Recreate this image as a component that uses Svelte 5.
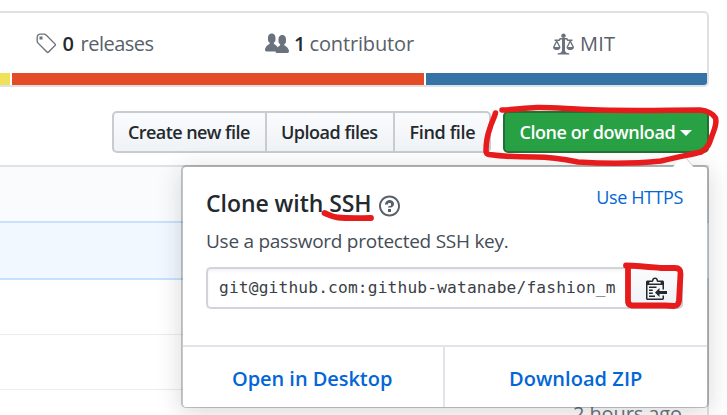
<script>
  const stats = [
    {
      name: 'tag', count: '0', label: 'releases', box: '0 0 14 16', width: 21,
      path: 'M7.73 1.73C7.26 1.26 6.62 1 5.96 1H3.5C2.13 1 1 2.13 1 3.5v2.47c0 .66.27 1.3.73 1.77l6.06 6.06c.39.39 1.02.39 1.41 0l4.59-4.59a.996.996 0 0 0 0-1.41L7.73 1.73zM2.38 7.09c-.31-.3-.47-.7-.47-1.13V3.5c0-.88.72-1.59 1.59-1.59h2.47c.42 0 .83.16 1.13.47l6.14 6.13-4.73 4.73-6.13-6.15zM3.01 3h2v2H3V3h.01z'
    },
    {
      name: 'people', count: '1', label: 'contributor', box: '0 0 16 16', width: 24,
      path: 'M16 12.999c0 .439-.45 1-1 1H7.995c-.539 0-.994-.447-.995-.999H1c-.54 0-1-.561-1-1 0-2.634 3-4 3-4s.229-.409 0-1c-.841-.621-1.058-.59-1-3 .058-2.419 1.367-3 2.5-3s2.442.58 2.5 3c.058 2.41-.159 2.379-1 3-.229.59 0 1 0 1s1.549.711 2.42 2.088C9.196 9.369 10 8.999 10 8.999s.229-.409 0-1c-.841-.62-1.058-.59-1-3 .058-2.419 1.367-3 2.5-3s2.437.581 2.495 3c.059 2.41-.158 2.38-1 3-.229.59 0 1 0 1s3.005 1.366 3.005 4'
    },
    {
      name: 'law', count: '', label: 'MIT', box: '0 0 14 16', width: 21,
      path: 'M7 4c-.83 0-1.5-.67-1.5-1.5S6.17 1 7 1s1.5.67 1.5 1.5S7.83 4 7 4zm7 6c0 1.11-.89 2-2 2h-1c-1.11 0-2-.89-2-2l2-4h-1c-.55 0-1-.45-1-1H8v8c.42 0 1 .45 1 1h1c.42 0 1 .45 1 1H3c0-.55.58-1 1-1h1c0-.55.58-1 1-1h.03L6 5H5c0 .55-.45 1-1 1H3l2 4c0 1.11-.89 2-2 2H2c-1.11 0-2-.89-2-2l2-4H1V5h3c0-.55.45-1 1-1h4c.55 0 1 .45 1 1h3v1h-1l2 4zM2.5 7L1 10h3L2.5 7zM13 10l-1.5-3-1.5 3h3z'
    }
  ];
</script>

<div class="page">
  <section class="summary">
    <div class="stats">
      {#each stats as s}
        <div class="stat {s.name}">
          <svg viewBox={s.box} width={s.width} height="24"><path fill-rule="evenodd" d={s.path} /></svg>
          {#if s.count}<b>{s.count}</b>{/if}
          <span>{s.label}</span>
        </div>
      {/each}
    </div>
    <div class="langs"><i class="js"></i><i class="html"></i><i class="py"></i></div>
  </section>

  <div class="actions">
    <div class="group">
      <button class="create"><span>Create new file</span></button>
      <button class="upload"><span>Upload files</span></button>
      <button class="find"><span>Find file</span></button>
    </div>
    <button class="clone"><span>Clone or download</span><i class="caret"></i></button>
  </div>

  <section class="files">
    <div class="commit"></div>
    <div class="notice"></div>
    <div class="row"></div>
    <div class="row"></div>
    <div class="row last"><span>2 hours ago</span></div>
  </section>

  <div class="popover">
    <div class="pointer"></div>
    <div class="body">
      <div class="head">
        <h4>Clone with SSH</h4>
        <svg viewBox="0 0 14 16" width="21" height="24"><path fill-rule="evenodd" d="M6 10h2v2H6v-2zm4-3.5C10 8.64 8 9 8 9H6c0-.55.45-1 1-1h.5c.28 0 .5-.22.5-.5v-1c0-.28-.22-.5-.5-.5h-1c-.28 0-.5.22-.5.5V7H4c0-1.5 1.5-3 3-3s3 1 3 2.5zM7 2.3c3.14 0 5.7 2.56 5.7 5.7s-2.56 5.7-5.7 5.7A5.71 5.71 0 0 1 1.3 8c0-3.14 2.56-5.7 5.7-5.7zM7 1C3.14 1 0 4.14 0 8s3.14 7 7 7 7-3.14 7-7-3.14-7-7-7z" /></svg>
        <a class="https">Use HTTPS</a>
      </div>
      <p>Use a password protected SSH key.</p>
      <div class="url">
        <div class="field"><span>git@github.com:github-watanabe/fashion_mnist.git</span></div>
        <button class="copy" aria-label="Copy">
          <svg viewBox="0 0 14 16" width="21" height="24"><path fill-rule="evenodd" d="M2 13h4v1H2v-1zm5-6H2v1h5V7zm2 3V8l-3 3 3 3v-2h5v-2H9zM4.500 9H2v1h2.500V9zM2 12h2.500v-1H2v1zm9 1h1v2c-.02.28-.11.52-.3.7-.19.18-.42.28-.7.3H1c-.55 0-1-.45-1-1V4c0-.55.45-1 1-1h3c0-1.110.89-2 2-2s2 .89 2 2h3c.55 0 1 .45 1 1v5h-1V6H1v9h10v-2zM2 5h8c0-.55-.45-1-1-1H8c-.55 0-1-.45-1-1s-.45-1-1-1-1 .45-1 1-.45 1-1 1H3c-.55 0-1 .45-1 1z" /></svg>
        </button>
      </div>
    </div>
    <div class="foot">
      <a class="desktop">Open in Desktop</a>
      <a class="zip">Download ZIP</a>
    </div>
  </div>

  <svg class="marks" viewBox="0 0 727 415" width="727" height="415">
    <path d="M495.500 113C494 119 491 123 490 128C487 136 486 143 486 151Q486 154 489 154.500C500 156 514 157 535 157C552 157 563 159 578 162C610 164 642 163 661 161C678 157 693 154 701 152C710 147 710 140 713 133Q717 123 715.500 118Q711 111 700 110C670 110 640 111 600 110C570 109 549 107 537 107.500C523 108 514 110 502 110" stroke-width="5.500" />
    <path d="M324.500 213C329 215 332 217 338 217.500C348 218.500 360 218 371 218" stroke-width="5.800" />
    <path d="M626 265.500C640 266 650 267 661 268L675 268Q681 268 680.500 274L679 301Q678 306 674 306L665 305.500L632 305.500Q627.500 305 628 300L628 269" stroke-width="5.800" />
  </svg>
</div>

<style>
  .page {
    position: relative; width: 727px; height: 415px; overflow: hidden; background: #fff;
    font-family: "Open Sans", "Noto Sans", sans-serif; color: #24292e; font-size: 20px;
  }
  * { box-sizing: border-box; }
  svg { display: block; flex: none; fill: currentColor; }
  button { font-family: inherit; padding: 0; margin: 0; text-align: left; }
  .summary {
    margin-top: 11px; width: 709px; height: 76px; border: 2px solid #dfe2e5; border-left: 0;
    border-radius: 0 5px 5px 0; overflow: hidden;
  }
  .stats { display: flex; height: 60px; padding-left: 34.500px; color: #6a737d; }
  .stat { display: flex; height: 60px; align-items: center; color: #586069; white-space: nowrap; }
  .stat svg { color: #6a737d; margin-top: 1px; }
  .stat b { font-weight: 600; color: #24292e; }
  .tag { width: 230.500px; }
  .people { width: 288px; }
  .tag b { width: 18px; margin-left: 7px; }
  .people b { width: 15.500px; margin-left: 5px; }
  .law span { margin-left: 6px; letter-spacing: .2px; }
  .tag span { letter-spacing: -.5px; }
  .people span { letter-spacing: -.15px; }
  .langs { display: flex; gap: 2px; height: 12px; }
  .langs i { display: block; }
  .js { width: 10px; background: #f1e05a; }
  .html { width: 412px; background: #e34c26; }
  .py { flex: 1; background: #3572a5; }
  .actions { display: flex; margin: 24px 18px 0 112px; height: 42px; }
  .group { display: flex; width: 379px; margin-right: 12px; }
  .group button, .clone {
    display: flex; align-items: center; height: 42px; font-size: 18px; font-weight: 600; white-space: nowrap;
    border: 2px solid #c8ccd0; color: #24292e; background: linear-gradient(#fafbfc, #eff3f6);
  }
  .group .create { width: 155px; padding-left: 14px; border-radius: 5px 0 0 5px; }
  .group .upload { width: 128px; padding-left: 14px; border-left: 0; }
  .group .find { width: 96px; padding-left: 14.500px; border-left: 0; border-radius: 0 5px 5px 0; }
  .create span { letter-spacing: -.57px; }
  .upload span { letter-spacing: -.5px; }
  .find span { letter-spacing: -.35px; }
  .clone { width: 206px; padding-left: 14.500px; color: #fff; background: #28a044; border-color: #246f38; border-radius: 5px; }
  .clone span { width: 160px; letter-spacing: -.45px; }
  .caret { border: 6px solid transparent; border-top-color: #fff; border-bottom: 0; margin-top: 2px; }
  .files { width: 709px; margin-top: 12px; border-top: 2px solid #dfe2e5; border-right: 2px solid #dfe2e5; height: 260px; }
  .commit { height: 54px; background: #fafbfc; }
  .notice { height: 59px; width: 709px; background: #f1f8ff; border: 2px solid #c8e1ff; border-left: 0; border-right: 0; }
  .row { height: 55px; border-bottom: 1px solid #eaecef; }
  .last { height: 40px; border: 0; padding: 10px 0 0 573px; color: #6a737d; white-space: nowrap; }
  .last span { letter-spacing: -.1px; }
  .popover {
    position: absolute; left: 181px; top: 165px; width: 528px; height: 243px;
    border: 2px solid rgba(27,31,35,.25); border-bottom-width: 1px; border-radius: 5px;
    background: #fff; background-clip: padding-box; box-shadow: 0 5px 24px rgba(27,31,35,.17);
  }
  .pointer {
    position: absolute; right: 14px; top: -12px; width: 0; height: 0;
    border: 10px solid transparent; border-bottom: 12px solid #fff; border-top: 0;
    filter: drop-shadow(1px 0 0 #c8ccd0);
  }
  .body { height: 178px; padding: 21px 24px 0 23px; }
  .head { display: flex; height: 30px; align-items: center; white-space: nowrap; }
  h4 { margin: 0; width: 173px; font-size: 23px; font-weight: 600; letter-spacing: -.05px; }
  .head svg { color: #586069; margin-top: 5px; }
  .https { margin: -13px 0 0 auto; color: #0366d6; font-size: 18px; letter-spacing: -.4px; }
  p { margin: 8px 0 0; height: 30px; line-height: 30px; font-size: 19px; letter-spacing: -.26px; color: #444d56; white-space: nowrap; }
  .url { display: flex; margin-top: 11px; height: 42px; width: 477px; }
  .field {
    width: 422px; border: 2px solid #d1d5da; border-right: 0; border-radius: 5px 0 0 5px;
    padding: 0 10px 0 11px; box-shadow: inset 0 2px 3px rgba(27,31,35,.06);
    font: 16.200px/38px "DejaVu Sans Mono", monospace; color: #3a4046;
  }
  .field span { display: block; overflow: hidden; white-space: nowrap; width: 398px; letter-spacing: .17px; }
  .copy {
    flex: 1; display: flex; align-items: center; justify-content: center; color: #24292e;
    border: 2px solid #c8ccd0; border-radius: 0 5px 5px 0; background: linear-gradient(#fafbfc, #eff3f6);
  }
  .copy svg { margin-left: 1px; }
  .foot { display: flex; height: 62px; border-top: 2px solid #e1e4e8; font-weight: 600; color: #0366d6; }
  .foot a { display: flex; align-items: center; padding-top: 2px; white-space: nowrap; }
  .desktop { width: 262px; padding-left: 49px; border-right: 2px solid #e1e4e8; letter-spacing: -.05px; }
  .zip { padding-left: 64px; letter-spacing: .05px; }
  .marks { position: absolute; left: 0; top: 0; fill: none; stroke: #e71b1b; stroke-linecap: round; stroke-linejoin: round; pointer-events: none; }
</style>
